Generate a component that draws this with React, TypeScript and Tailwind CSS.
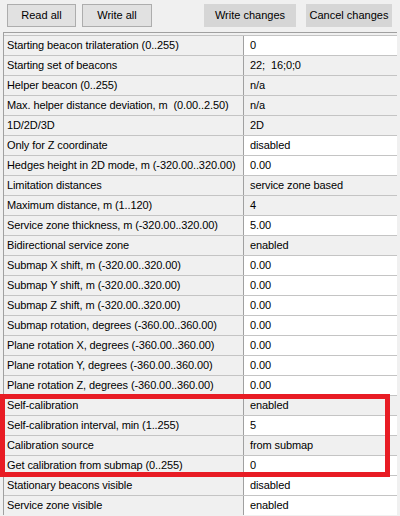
import React from "react";

type Row = {
  label: string;
  value: string;
  editable?: boolean;
};

const rows: Row[] = [
  { label: "Starting beacon trilateration (0..255)", value: "0", editable: true },
  { label: "Starting set of beacons", value: "22;  16;0;0" },
  { label: "Helper beacon (0..255)", value: "n/a" },
  { label: "Max. helper distance deviation, m  (0.00..2.50)", value: "n/a" },
  { label: "1D/2D/3D", value: "2D" },
  { label: "Only for Z coordinate", value: "disabled", editable: true },
  { label: "Hedges height in 2D mode, m (-320.00..320.00)", value: "0.00", editable: true },
  { label: "Limitation distances", value: "service zone based" },
  { label: "Maximum distance, m (1..120)", value: "4" },
  { label: "Service zone thickness, m (-320.00..320.00)", value: "5.00", editable: true },
  { label: "Bidirectional service zone", value: "enabled" },
  { label: "Submap X shift, m (-320.00..320.00)", value: "0.00", editable: true },
  { label: "Submap Y shift, m (-320.00..320.00)", value: "0.00", editable: true },
  { label: "Submap Z shift, m (-320.00..320.00)", value: "0.00", editable: true },
  { label: "Submap rotation, degrees (-360.00..360.00)", value: "0.00", editable: true },
  { label: "Plane rotation X, degrees (-360.00..360.00)", value: "0.00", editable: true },
  { label: "Plane rotation Y, degrees (-360.00..360.00)", value: "0.00", editable: true },
  { label: "Plane rotation Z, degrees (-360.00..360.00)", value: "0.00", editable: true },
  { label: "Self-calibration", value: "enabled" },
  { label: "Self-calibration interval, min (1..255)", value: "5", editable: true },
  { label: "Calibration source", value: "from submap" },
  { label: "Get calibration from submap (0..255)", value: "0", editable: true },
  { label: "Stationary beacons visible", value: "disabled", editable: true },
  { label: "Service zone visible", value: "enabled", editable: true },
];

function ToolButton({ label, width, dark }: { label: string; width: string; dark?: boolean }) {
  return (
    <button
      className={
        dark
          ? `${width} h-[23px] whitespace-nowrap bg-[#d6d6d6] border border-[#d6d6d6] text-black`
          : `${width} h-[23px] whitespace-nowrap bg-[#e1e1e1] border border-[#adadad] text-black`
      }
    >
      {label}
    </button>
  );
}

export default function App() {
  return (
    <div
      className="relative w-[400px] h-[516px] overflow-hidden bg-[#f0f0f0] text-[11px] text-black"
      style={{ fontFamily: '"Liberation Sans", Arial, sans-serif' }}
    >
      {/* toolbar */}
      <div className="flex h-[32px] items-start pt-[4px]">
        <div className="ml-[7px]">
          <ToolButton label="Read all" width="w-[69px]" />
        </div>
        <div className="ml-[6px]">
          <ToolButton label="Write all" width="w-[70px]" />
        </div>
        <div className="ml-[52px]">
          <ToolButton label="Write changes" width="w-[92px]" dark />
        </div>
        <div className="ml-[10px]">
          <ToolButton label="Cancel changes" width="w-[86px]" dark />
        </div>
      </div>

      {/* property grid */}
      <div className="ml-[3px] w-[394px] border-t border-l border-[#a0a0a0] pt-[2px]">
        {rows.map((row) => (
          <div
            key={row.label}
            className="grid h-[20px] grid-cols-[239px_1fr] border-t border-[#c4c4c4]"
          >
            <div className="overflow-hidden whitespace-pre pl-[3px] leading-[19px] tracking-[-0.1px] bg-[#f0f0f0]">
              {row.label}
            </div>
            <div
              className={
                row.editable
                  ? "whitespace-pre border-l border-[#a0a0a0] bg-white pl-[6px] leading-[19px] tracking-[-0.1px]"
                  : "whitespace-pre border-l border-[#a0a0a0] bg-[#f0f0f0] pl-[6px] leading-[19px] tracking-[-0.1px]"
              }
            >
              {row.value}
            </div>
          </div>
        ))}
      </div>

      {/* highlight frame around the calibration block */}
      <div className="pointer-events-none absolute left-0 top-[394px] h-[83px] w-[390px] border-[5px] border-[#e81c24]" />
    </div>
  );
}
